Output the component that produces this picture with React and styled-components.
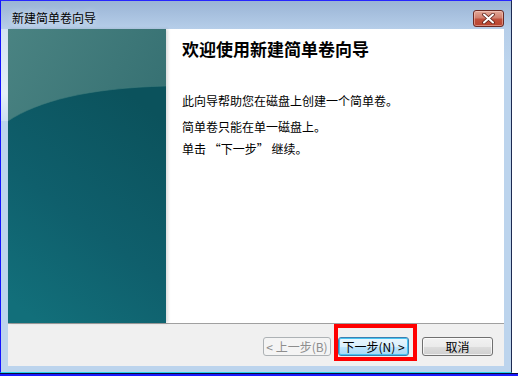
import React from 'react';
import styled, { createGlobalStyle } from 'styled-components';

const GlobalStyle = createGlobalStyle`
  html, body {
    margin: 0;
    padding: 0;
    background: #ffffff;
  }
  body {
    font-family: "Noto Sans CJK SC", "Liberation Sans", sans-serif;
  }
`;

const Screen = styled.div`
  width: 518px;
  height: 376px;
  display: flex;
  flex-direction: column;
  overflow: hidden;
`;

const WindowRow = styled.div`
  display: flex;
`;

const Window = styled.div`
  width: 512px;
  height: 373px;
  border-left: 1px solid #1414ff;
  border-top: 1px solid #2626ff;
  border-right: 1px solid #1c2a52;
  box-sizing: border-box;
  display: flex;
  flex-direction: column;
  background: linear-gradient(to bottom, #9ab4d5 0px, #b6cee9 28px, #bcd4ed 60px, #bcd4ed 100%);
  border-bottom: 1px solid #2ad2ea;
  position: relative;
`;

const GlassStrip = styled.div`
  position: absolute;
  left: 0;
  top: 28px;
  width: 7px;
  height: 92px;
  background: linear-gradient(to bottom, #d4e2f2, #e4eef8 70%, #cddff0);
`;

const TitleBar = styled.div`
  height: 28px;
  flex: none;
  display: flex;
  align-items: flex-start;
  justify-content: space-between;
  padding: 8px 7px 0 11px;
  box-sizing: border-box;
`;

const TitleText = styled.span`
  font-size: 12px;
  line-height: 17px;
  color: #000;
  text-shadow: 0 0 6px rgba(255, 255, 255, 0.7);
`;

const CloseButton = styled.div`
  width: 31px;
  height: 17px;
  box-sizing: border-box;
  border: 1px solid #6b2a24;
  border-radius: 3px;
  background: linear-gradient(to bottom, #e3a999 0%, #d1806f 45%, #c0503c 55%, #b9442f 100%);
  box-shadow: inset 0 0 0 1px rgba(255, 220, 210, 0.45);
  display: flex;
  align-items: center;
  justify-content: center;
  margin-top: 1px;
`;

const Body = styled.div`
  margin: 0 7px;
  flex: none;
  display: flex;
  flex-direction: column;
`;

const Main = styled.div`
  height: 294px;
  display: flex;
  background: #ffffff;
`;

const Banner = styled.div`
  width: 158px;
  height: 294px;
  flex: none;
  box-shadow: 2px 0 3px rgba(0, 0, 0, 0.14);
  position: relative;
  z-index: 1;

  svg {
    display: block;
  }
`;

const Welcome = styled.div`
  flex: 1;
  padding: 10px 16px 0 16px;
`;

const Heading = styled.h1`
  margin: 0 0 34px 0;
  font-size: 17px;
  line-height: 20px;
  font-weight: bold;
  color: #000;
`;

const Para = styled.p`
  margin: 0 0 ${p => p.$gap}px 0;
  font-size: 12px;
  line-height: 16px;
  color: #000;
`;

const ButtonBar = styled.div`
  height: 43px;
  box-sizing: border-box;
  border-top: 1px solid #a0a0a0;
  background: #f0f0f0;
  display: flex;
  justify-content: flex-end;
  align-items: flex-start;
  padding: 13px 11px 0 0;
`;

const Button = styled.button`
  width: ${p => p.$w || 71}px;
  height: 19px;
  margin-left: ${p => p.$ml || 0}px;
  padding: 0;
  box-sizing: border-box;
  border-radius: 3px;
  font-family: "Noto Sans CJK SC", "Liberation Sans", sans-serif;
  font-size: 12px;
  line-height: 15px;
  border: 1px solid #707070;
  color: #000;
  background: linear-gradient(to bottom, #f2f2f2 0%, #ebebeb 50%, #dddddd 51%, #cfcfcf 100%);
  box-shadow: inset 0 0 0 1px rgba(255, 255, 255, 0.7);

  &.primary {
    border-color: #3c7fb1;
    background: linear-gradient(to bottom, #eaf6fd 0%, #d9f0fc 50%, #bee6fd 51%, #a7d9f5 100%);
    box-shadow: inset 0 0 0 1px #48c4f1;
  }

  &:disabled {
    border-color: #adb2b5;
    color: #8d8d8d;
    background: #f4f4f4;
    box-shadow: none;
  }
`;

const Marked = styled.div`
  position: relative;
  margin-left: 7px;
  display: flex;
`;

const Highlight = styled.div`
  position: absolute;
  top: -13px;
  left: -4px;
  right: -8px;
  bottom: -5px;
  border: 4px solid #ff0000;
  box-sizing: border-box;
  pointer-events: none;
`;

const BottomEdge = styled.div`
  height: 1px;
  background: #0a0a3a;
  border-bottom: 2px solid #1a1aff;
`;

const XIcon = () => (
  <svg width="13" height="11" viewBox="0 0 13 11">
    <path
      d="M2 1.5 L11 9.5 M11 1.5 L2 9.5"
      stroke="#5a1f18"
      strokeWidth="3.6"
      strokeLinecap="round"
    />
    <path
      d="M2 1.5 L11 9.5 M11 1.5 L2 9.5"
      stroke="#ffffff"
      strokeWidth="2"
      strokeLinecap="round"
    />
  </svg>
);

const BannerArt = () => (
  <svg width="158" height="294" viewBox="0 0 158 294">
    <defs>
      <linearGradient id="topGlow" x1="0" y1="0" x2="1" y2="1">
        <stop offset="0" stopColor="#4a8382" />
        <stop offset="1" stopColor="#2a6569" />
      </linearGradient>
      <linearGradient id="deep" x1="0.7" y1="0" x2="0.2" y2="1">
        <stop offset="0" stopColor="#0b525c" />
        <stop offset="0.55" stopColor="#0f5f6c" />
        <stop offset="1" stopColor="#126f7a" />
      </linearGradient>
    </defs>
    <rect width="158" height="294" fill="url(#topGlow)" />
    <path d="M0 92 C 30 72, 80 59, 158 57 L158 294 L0 294 Z" fill="url(#deep)" />
    <path d="M0 92 C 30 72, 80 59, 158 57" fill="none" stroke="#3f7b7c" strokeWidth="1" opacity="0.6" />
  </svg>
);

export default function App() {
  return (
    <Screen>
      <GlobalStyle />
      <WindowRow>
        <Window>
          <GlassStrip />
          <TitleBar>
            <TitleText>新建简单卷向导</TitleText>
            <CloseButton>
              <XIcon />
            </CloseButton>
          </TitleBar>
          <Body>
            <Main>
              <Banner>
                <BannerArt />
              </Banner>
              <Welcome>
                <Heading>欢迎使用新建简单卷向导</Heading>
                <Para $gap={10}>此向导帮助您在磁盘上创建一个简单卷。</Para>
                <Para $gap={6}>简单卷只能在单一磁盘上。</Para>
                <Para $gap={0}>单击 “下一步” 继续。</Para>
              </Welcome>
            </Main>
            <ButtonBar>
              <Button $w={68} disabled>&lt; 上一步(B)</Button>
              <Marked>
                <Button className="primary">下一步(N) &gt;</Button>
                <Highlight />
              </Marked>
              <Button $ml={13}>取消</Button>
            </ButtonBar>
          </Body>
        </Window>
      </WindowRow>
      <BottomEdge />
    </Screen>
  );
}
